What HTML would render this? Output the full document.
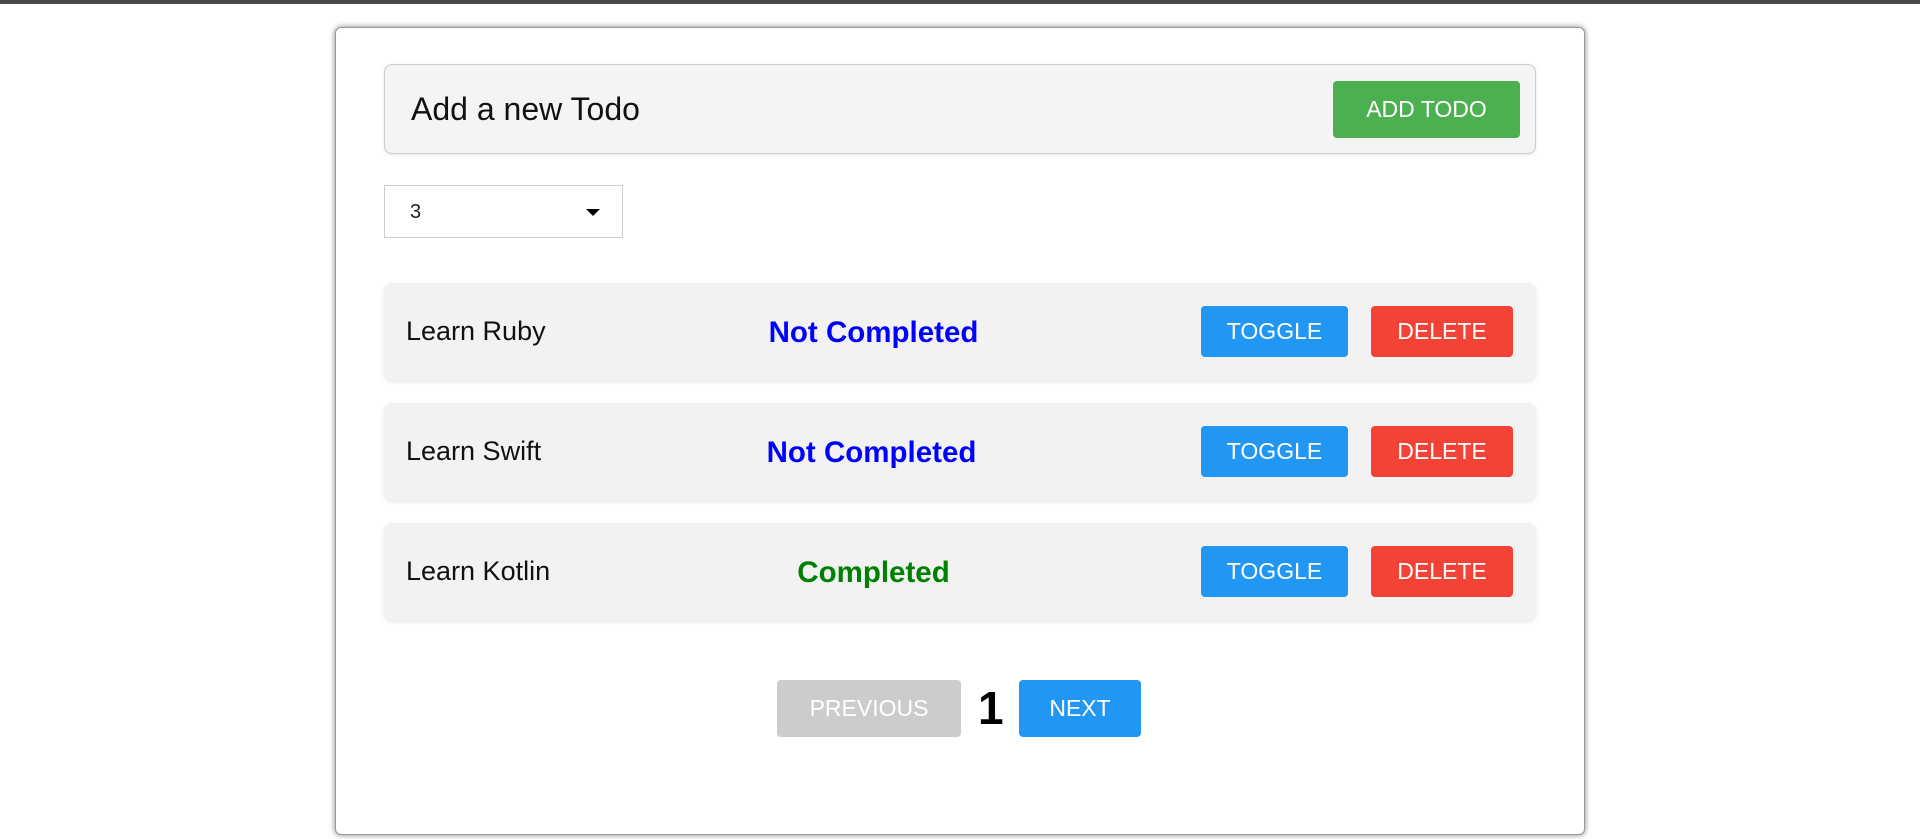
<!DOCTYPE html>
<html><head><style>
*{box-sizing:border-box;margin:0;padding:0}
body{width:1920px;height:839px;background:#fff;font-family:"Liberation Sans",Arial,sans-serif;position:relative;overflow:hidden}
.top{position:absolute;left:0;top:0;width:1920px;height:4px;background:#4a4a4a}
.card{position:absolute;left:335px;top:27px;width:1250px;height:808px;border:1px solid #999;border-radius:6px;box-shadow:0 0 6px rgba(0,0,0,.5);background:#fff}
.abs{position:absolute}
.input{left:384px;top:64px;width:1152px;height:90px;background:#f4f4f4;border:1px solid #ccc;border-radius:8px;box-shadow:0 1px 3px rgba(0,0,0,.1)}
.input span{position:absolute;left:26px;top:26px;font-size:32px;color:#111}
.btn{position:absolute;color:#fff;font-size:23px;display:flex;align-items:center;justify-content:center;border-radius:4px}
.sel{left:384px;top:185px;width:239px;height:53px;border:1px solid #ccc;background:#fff}
.sel span{position:absolute;left:25px;top:15px;font-size:20px;color:#222}
.sel i{position:absolute;left:201px;top:23px;width:0;height:0;border-left:7px solid transparent;border-right:7px solid transparent;border-top:7px solid #000}
.row{position:absolute;left:384px;width:1152px;height:97px;background:#f2f2f2;border-radius:8px;box-shadow:0 2px 4px rgba(0,0,0,.1)}
.row .n{position:absolute;left:22px;top:33px;font-size:27px;color:#111}
.row .s{position:absolute;left:313px;width:353px;text-align:center;top:33px;font-size:29.5px;font-weight:bold}
.t{left:817px;top:23px;width:147px;height:51px;background:#2196f3}
.d{left:987px;top:23px;width:142px;height:51px;background:#f44336}
</style></head><body>
<div class="top"></div>
<div class="card"></div>
<div class="abs input"><span>Add a new Todo</span></div>
<div class="btn" style="left:1333px;top:81px;width:187px;height:57px;background:#4caf50">ADD TODO</div>
<div class="abs sel"><span>3</span><i></i></div>
<div class="row" style="top:283px"><span class="n">Learn Ruby</span><span class="s" style="color:#0000ff">Not Completed</span><div class="btn t">TOGGLE</div><div class="btn d">DELETE</div></div>
<div class="row" style="top:403px"><span class="n">Learn Swift</span><span class="s" style="color:#0000ff;left:311px">Not Completed</span><div class="btn t">TOGGLE</div><div class="btn d">DELETE</div></div>
<div class="row" style="top:523px"><span class="n">Learn Kotlin</span><span class="s" style="color:#008000">Completed</span><div class="btn t">TOGGLE</div><div class="btn d">DELETE</div></div>
<div class="btn" style="left:777px;top:680px;width:184px;height:57px;background:#cccccc">PREVIOUS</div>
<div class="abs" style="left:978px;top:680px;height:57px;line-height:57px;font-size:46px;font-weight:bold;color:#000">1</div>
<div class="btn" style="left:1019px;top:680px;width:122px;height:57px;background:#2196f3">NEXT</div>
</body></html>
